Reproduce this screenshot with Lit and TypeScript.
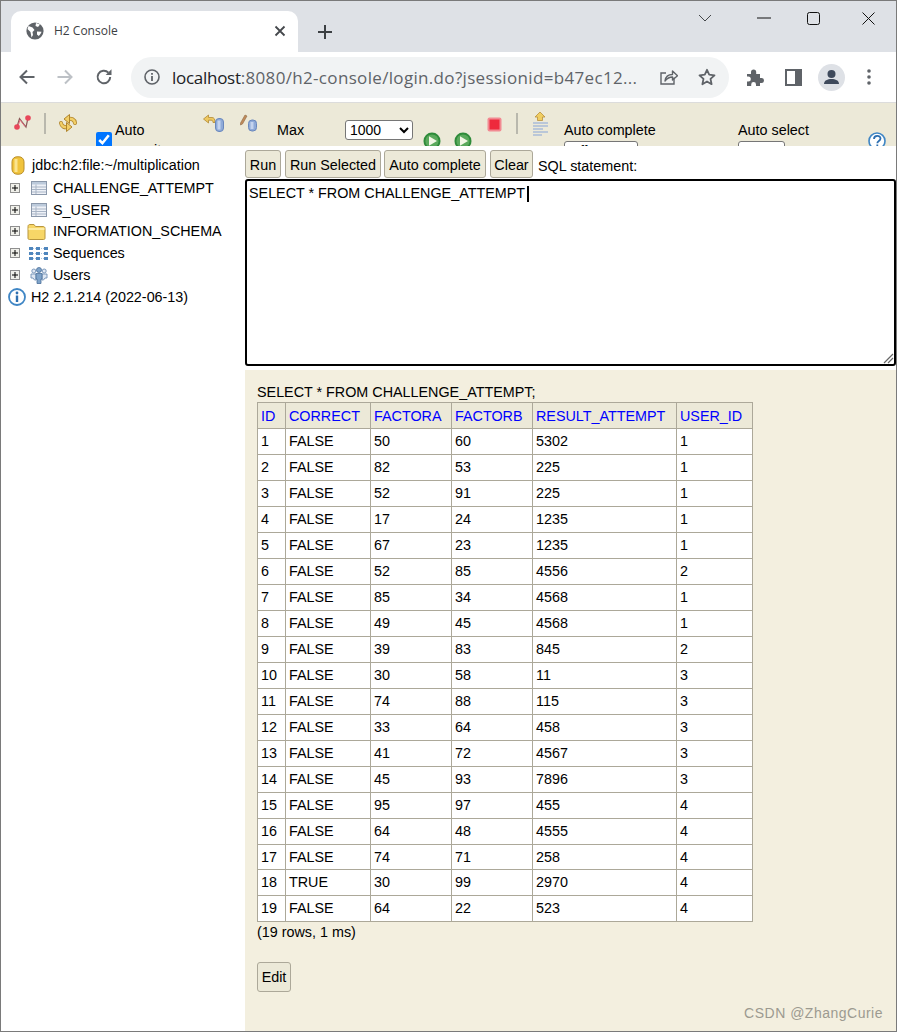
import { LitElement, html, css, svg } from "lit";
import { customElement } from "lit/decorators.js";

const ROWS: (string | number)[][] = [
  [1, "FALSE", 50, 60, 5302, 1],
  [2, "FALSE", 82, 53, 225, 1],
  [3, "FALSE", 52, 91, 225, 1],
  [4, "FALSE", 17, 24, 1235, 1],
  [5, "FALSE", 67, 23, 1235, 1],
  [6, "FALSE", 52, 85, 4556, 2],
  [7, "FALSE", 85, 34, 4568, 1],
  [8, "FALSE", 49, 45, 4568, 1],
  [9, "FALSE", 39, 83, 845, 2],
  [10, "FALSE", 30, 58, 11, 3],
  [11, "FALSE", 74, 88, 115, 3],
  [12, "FALSE", 33, 64, 458, 3],
  [13, "FALSE", 41, 72, 4567, 3],
  [14, "FALSE", 45, 93, 7896, 3],
  [15, "FALSE", 95, 97, 455, 4],
  [16, "FALSE", 64, 48, 4555, 4],
  [17, "FALSE", 74, 71, 258, 4],
  [18, "TRUE", 30, 99, 2970, 4],
  [19, "FALSE", 64, 22, 523, 4],
];
const COLS = ["ID", "CORRECT", "FACTORA", "FACTORB", "RESULT_ATTEMPT", "USER_ID"];

const runIcon = html`<svg width="18" height="18" viewBox="0 0 18 18"><circle cx="9" cy="9" r="8.5" fill="#2e8b3a"/><circle cx="9" cy="9" r="6.6" fill="#5aa95c"/><path d="M6 4.2 14 9 6 13.8z" fill="#f2f7e6"/></svg>`;
const cyl = (x: number, y: number, h: number) => svg`<rect x="${x}" y="${y}" width="8" height="${h}" rx="3.5" fill="#8faad8" stroke="#6a88bd" stroke-width="1"/><rect x="${x + 2}" y="${y + 2}" width="3" height="${h - 4}" fill="#c4d3ee"/>`;
const plus = html`<svg class="plus" width="10" height="10" viewBox="0 0 10 10"><rect x=".5" y=".5" width="9" height="9" fill="#f0f0ea" stroke="#8f8f8f"/><path d="M2 5h6M5 2v6" stroke="#000" stroke-width="1"/></svg>`;
const tableIcon = html`<svg class="ti" width="16" height="14" viewBox="0 0 16 14"><rect x=".5" y=".5" width="15" height="13" fill="#eef1f7" stroke="#8b98ab"/><rect x="1" y="1" width="14" height="2.500" fill="#bccadb"/><path d="M1 6h14M1 8.500h14M1 11h14M5 3.500V13" stroke="#a9b5c6"/></svg>`;

@customElement("app-root")
export class AppRoot extends LitElement {
  static styles = css`
    :host { display: block; width: 897px; height: 1032px; position: relative; overflow: hidden; font-family: "Liberation Sans", Arial, sans-serif; font-size: 14.35px; color: #000; }
    .win { box-sizing: border-box; width: 897px; height: 1032px; border: 1px solid #7a7a7a; display: flex; flex-direction: column; background: #fff; overflow: hidden; }

    .strip { height: 51px; flex: none; background: #dee1e6; display: flex; align-items: flex-end; padding-left: 10px; }
    .tab { width: 287px; height: 41px; box-sizing: border-box; background: #fff; border-radius: 10px 10px 0 0; display: flex; align-items: center; padding: 0 0 2px 15px; font-family: "Open Sans", "Noto Sans", sans-serif; font-size: 12px; color: #3c4043; position: relative; }
    .tab .title { margin-left: 10px; flex: 1; }
    .tab .x { margin-right: 12px; display: flex; }
    .new { margin: 0 0 10px 19px; align-self: flex-end; height: 20px; display: flex; }
    .new svg { margin-top: 2px; }
    .ctrl { margin-left: auto; align-self: flex-start; display: flex; align-items: center; height: 14px; margin-top: 10px; }
    .ctrl svg { display: block; }
    .c1 { margin-right: 45px; }
    .c2 { margin-right: 36px; }
    .c3 { margin-right: 42px; }
    .c4 { margin-right: 21px; }

    .nav { height: 50px; flex: none; background: #fff; display: flex; align-items: center; border-bottom: 1px solid #dcdcdc; box-sizing: content-box; }
    .nav svg { display: block; flex: none; }
    .back { margin-left: 18px; }
    .fwd { margin-left: 22px; }
    .rel { margin-left: 22px; }
    .omni { margin-left: 18px; width: 598px; height: 41px; background: #f1f3f4; border-radius: 21px; display: flex; align-items: center; box-sizing: border-box; padding-left: 13px; }
    .url { margin-left: 12px; font-family: "Open Sans", "Noto Sans", sans-serif; font-size: 17px; letter-spacing: 0.33px; color: #5f6368; white-space: nowrap; width: 474px; overflow: hidden; }
    .url b { font-weight: 400; color: #202124; letter-spacing: -0.28px; }
    .share { margin-left: 14px; }
    .star { margin-left: 20px; }
    .puz { margin-left: 17px; }
    .side { margin-left: 21px; }
    .avatar { margin-left: 16px; }
    .dots { margin-left: 22px; }

    .h2bar { height: 43px; flex: none; background: #ece9d8; display: flex; align-items: flex-start; overflow: hidden; color: #000; }
    .h2bar > * { flex: none; }
    .h2bar svg { display: block; }
    .i-conn { margin: 10px 0 0 11px; }
    .sep { width: 2px; height: 21px; background: #b9b8ad; margin-top: 10px; }
    .s1 { margin-left: 12px; }
    .i-ref { margin: 10px 0 0 12px; }
    .auto { margin: 17px 0 0 18px; width: 95px; display: flex; align-items: flex-start; }
    .auto input { width: 16px; height: 16px; margin: 12px 3px 0 0; flex: none; accent-color: #0075ff; }
    .auto span { line-height: 20px; width: 50px; }
    .i-hist { margin: 10px 0 0 12px; }
    .i-edit { margin: 10px 0 0 16px; }
    .max { margin: 19px 0 0 19px; width: 68px; line-height: 16px; }
    .sel { height: 20px; font: 14px "Liberation Sans", Arial, sans-serif; background: #fff; border: 1px solid #767676; border-radius: 3px; padding: 0; box-sizing: border-box; }
    .s-max { width: 68px; margin-top: 17px; }
    .r1 { margin: 29px 0 0 10px; }
    .r2 { margin: 29px 0 0 13px; }
    .i-stop { margin: 14px 0 0 15px; }
    .s2 { margin-left: 14px; }
    .i-page { margin: 9px 0 0 14px; }
    .ac { margin: 19px 0 0 14px; width: 174px; display: flex; flex-direction: column; align-items: flex-start; line-height: 16px; gap: 3px; }
    .as { width: 130px; display: flex; flex-direction: column; align-items: flex-start; line-height: 16px; gap: 3px; margin-top: 19px; }
    .s-ac { width: 74px; }
    .s-as { width: 47px; }
    .help { margin-top: 29px; }

    .main { flex: 1; display: flex; min-height: 0; }
    .tree { width: 244px; flex: none; padding-top: 8px; box-sizing: border-box; color: #000; }
    .row { height: 22px; display: flex; align-items: center; white-space: nowrap; }
    .row svg { display: block; flex: none; }
    .row.first { height: 22px; margin-bottom: 1px; }
    .row.thin { height: 21px; }
    .plus { margin-left: 9px; }
    .ti { margin-left: 11px; margin-right: 6px; }
    .db { margin: 0 7px 0 10px; }
    .fo { margin-left: 7px; margin-right: 7px; }
    .sq { margin-left: 9px; margin-right: 5px; }
    .us { margin-left: 10px; margin-right: 5px; }
    .inf { margin: 0 5px 0 7px; }

    .right { flex: 1; display: flex; flex-direction: column; min-width: 0; }
    .btns { display: flex; align-items: flex-start; padding-top: 4px; height: 33px; box-sizing: border-box; gap: 3px; }
    .btns span { line-height: 32px; }
    button { height: 28px; box-sizing: border-box; font: 14.35px "Liberation Sans", Arial, sans-serif; background: #ece9d8; color: #000; border: 1px solid #aca899; border-radius: 3px; padding: 1px 0 0; margin: 0; }
    .b-run { width: 36px; margin-right: 1px; }
    .b-sel { width: 96px; }
    .b-auto { width: 102px; margin-right: 1px; }
    .b-clr { width: 43px; margin-right: 2px; }
    .ta { box-sizing: border-box; height: 187px; width: 651px; border: 2px solid #000; border-radius: 3px; padding: 4px 2px; line-height: 16px; position: relative; white-space: pre; }
    .caret { display: inline-block; width: 2px; height: 16px; background: #000; vertical-align: top; margin: 1px 0 0 2px; }
    .grip { position: absolute; right: 0; bottom: 0; }
    .res { flex: 1; margin-top: 4px; background: #f3efdf; padding: 14px 0 0 12px; min-height: 0; }
    .q { line-height: 16px; margin-bottom: 2px; height: 16px; }
    table { border-collapse: collapse; }
    th, td { border: 1px solid #aca899; text-align: left; font-weight: 400; padding: 0 3px; height: 26px; box-sizing: border-box; line-height: 16px; background: #fff; }
    td { padding-bottom: 1px; }
    tr.short td { height: 25px; }
    th { background: #ece9d8; color: #0000ff; }
    .w0 { width: 28px; } .w1 { width: 85px; } .w2 { width: 81px; } .w3 { width: 81px; } .w4 { width: 144px; } .w5 { width: 76px; }
    .cnt { line-height: 16px; margin-top: 2px; }
    .edit { margin-top: 22px; display: block; width: 34px; height: 30px; padding: 0; }
    .wm { position: absolute; right: 14px; bottom: 11px; font-size: 14px; line-height: 16px; color: #9c9a90; letter-spacing: 0.5px; }
  `;

  render() {
    return html`<div class="win">
      <div class="strip">
        <div class="tab">
          <svg width="18" height="18" viewBox="0 0 18 18"><circle cx="9" cy="9" r="8.6" fill="#5f6368"/><path d="M2.500 4 6.500 5.500 8.500 8 6.500 10 7 13 5.500 15.500 4.500 10 1.500 7zM10 1 14 2.500 12 5 9.500 4zM11 9.500 15.500 9.800C15 11.500 14 13 12.800 14L11 12.500z" fill="#fff"/></svg>
          <span class="title">H2 Console</span>
          <span class="x"><svg width="12" height="12" viewBox="0 0 12 12"><path d="M1.500 1.500l9 9M10.500 1.500l-9 9" stroke="#45484c" stroke-width="1.800"/></svg></span>
        </div>
        <span class="new"><svg width="16" height="16" viewBox="0 0 16 16"><path d="M8 1v14M1 8h14" stroke="#3c4043" stroke-width="2"/></svg></span>
        <span class="ctrl">
          <svg class="c1" width="14" height="8" viewBox="0 0 14 8"><path d="M1 1l6 6 6-6" fill="none" stroke="#44474a" stroke-width="1"/></svg>
          <svg class="c2" width="14" height="2" viewBox="0 0 14 2"><path d="M0 1h14" stroke="#111" stroke-width="1"/></svg>
          <svg class="c3" width="13" height="13" viewBox="0 0 13 13"><rect x=".5" y=".5" width="12" height="12" rx="2" fill="none" stroke="#111"/></svg>
          <svg class="c4" width="13" height="13" viewBox="0 0 13 13"><path d="M.5.5l12 12M12.500.5l-12 12" stroke="#111" stroke-width="1"/></svg>
        </span>
      </div>

      <div class="nav">
        <svg class="back" width="16" height="16" viewBox="0 0 16 16"><path d="M15.500 8H1.500M8 1.500 1.500 8 8 14.500" fill="none" stroke="#5f6368" stroke-width="2"/></svg>
        <svg class="fwd" width="16" height="16" viewBox="0 0 16 16"><path d="M.5 8h14M8 1.500 14.500 8 8 14.500" fill="none" stroke="#bdc1c6" stroke-width="2"/></svg>
        <svg class="rel" width="18" height="18" viewBox="0 0 18 18"><path d="M15.200 9a6.300 6.300 0 1 1-1.800-4.400" fill="none" stroke="#5f6368" stroke-width="2"/><path d="M16.500 1.200V7H10.700z" fill="#5f6368"/></svg>
        <div class="omni">
          <svg width="16" height="16" viewBox="0 0 16 16"><circle cx="8" cy="8" r="7" fill="none" stroke="#5f6368" stroke-width="1.600"/><path d="M8 7v5M8 4v1.800" stroke="#5f6368" stroke-width="1.800"/></svg>
          <span class="url"><b>localhost</b>:8080/h2-console/login.do?jsessionid=b47ec12...</span>
          <svg class="share" width="18" height="18" viewBox="0 0 18 18"><path d="M14 9.500V16H1V5h5" fill="none" stroke="#5f6368" stroke-width="1.400"/><path d="M5 13c.5-4 3.500-6.500 7.500-6.500V3L17.500 7.800 12.500 12V9C9.500 9 7 10.500 5 13z" fill="none" stroke="#5f6368" stroke-width="1.400" stroke-linejoin="round"/></svg>
          <svg class="star" width="18" height="18" viewBox="0 0 18 18"><path d="M9 1.800l2.200 4.900 5.300.6-4 3.600 1.100 5.300L9 13.500l-4.600 2.700 1.100-5.300-4-3.600 5.300-.6z" fill="none" stroke="#5f6368" stroke-width="1.800" stroke-linejoin="round"/></svg>
        </div>
        <svg class="puz" width="18" height="18" viewBox="0 0 18 18"><path d="M1 6h4V4.200a2.600 2.600 0 0 1 5.200 0V6H14v4h1.500a2.500 2.500 0 0 1 0 5H14v3H10v-1.500a2.400 2.400 0 0 0-4.800 0V18H1v-4.500h1.300a2.500 2.500 0 0 0 0-5H1z" fill="#5f6368"/></svg>
        <svg class="side" width="17" height="17" viewBox="0 0 17 17"><rect x="1" y="1" width="15" height="15" fill="none" stroke="#5f6368" stroke-width="2"/><rect x="10" y="1" width="6" height="15" fill="#5f6368"/></svg>
        <svg class="avatar" width="27" height="27" viewBox="0 0 27 27"><circle cx="13.500" cy="13.500" r="13.500" fill="#dee1e6"/><circle cx="13.500" cy="10" r="4" fill="#3f4a5c"/><path d="M6 20c0-3.600 3.500-5 7.500-5s7.500 1.400 7.500 5z" fill="#3f4a5c"/></svg>
        <svg class="dots" width="4" height="16" viewBox="0 0 4 16"><circle cx="2" cy="2" r="1.800" fill="#5f6368"/><circle cx="2" cy="8" r="1.800" fill="#5f6368"/><circle cx="2" cy="14" r="1.800" fill="#5f6368"/></svg>
      </div>

      <div class="h2bar">
        <svg class="i-conn" width="20" height="20" viewBox="0 0 20 20"><path d="M5 14 7.500 5.500 14 14 16 5" fill="none" stroke="#8d5a5a" stroke-width="1.200"/><path d="M6 13 8 7 13 13.500" fill="none" stroke="#e8667a" stroke-width=".9"/><circle cx="5" cy="14" r="2.800" fill="#e8475a"/><circle cx="16" cy="5" r="2.800" fill="#e8475a"/></svg>
        <span class="sep s1"></span>
        <svg class="i-ref" width="20" height="20" viewBox="0 0 20 20"><g fill="none" stroke-linecap="round"><path d="M17 10C16.500 6.500 13.500 5.200 10 6M3 10C3.500 13.500 6.500 14.800 10 14" stroke="#b0852c" stroke-width="4"/><path d="M17 10C16.500 6.500 13.500 5.200 10 6M3 10C3.500 13.500 6.500 14.800 10 14" stroke="#f2cf68" stroke-width="2.400"/></g><path d="M11.500 1.500 6 6l5.500 4.500zM8.500 18.500 14 14 8.500 9.500z" fill="#f2cf68" stroke="#b0852c" stroke-width="1" stroke-linejoin="round"/></svg>
        <label class="auto"><input type="checkbox" checked /><span>Auto commit</span></label>
        <svg class="i-hist" width="21" height="19" viewBox="0 0 21 19"><path d="M.5 6 5.500 2v2.500H9c2 0 3 1.500 3 5H10c0-1.500-.5-2.300-2-2.300H5.500V10z" fill="#eec860" stroke="#b28a35" stroke-width=".8"/>${cyl(12.5, 5.5, 13)}</svg>
        <svg class="i-edit" width="18" height="19" viewBox="0 0 18 19"><path d="M.5 10 5 2 7 3 2.500 11l-2 1z" fill="#c08a5a" stroke="#8f6a45" stroke-width=".6"/>${cyl(8.5, 7, 11)}</svg>
        <span class="max">Max</span>
        <select class="sel s-max"><option>1000</option></select>
        <span class="r1">${runIcon}</span>
        <span class="r2">${runIcon}</span>
        <svg class="i-stop" width="15" height="15" viewBox="0 0 15 15"><rect x=".5" y=".5" width="14" height="14" rx="2" fill="#f28a92"/><rect x="2.500" y="2.500" width="10" height="10" fill="#ee2a3c"/></svg>
        <span class="sep s2"></span>
        <svg class="i-page" width="18" height="25" viewBox="0 0 18 25"><path d="M8 0 13 5H10.500V8.500H5.500V5H3z" fill="#f0ce62" stroke="#b9913c" stroke-width=".8"/><path d="M1 11h15M1 14h15M1 17h10M1 20h15M1 23h9" stroke="#a9bcd8" stroke-width="1.500"/></svg>
        <div class="ac"><span>Auto complete</span><select class="sel s-ac"><option>Off</option></select></div>
        <div class="as"><span>Auto select</span><select class="sel s-as"><option>On</option></select></div>
        <svg class="help" width="18" height="18" viewBox="0 0 18 18"><circle cx="9" cy="9" r="8" fill="#fff" stroke="#3f86c5" stroke-width="1.600"/><path d="M6 7c0-4.200 6.500-4.200 6.500-.5 0 2.500-3.200 2.500-3.200 4.800" fill="none" stroke="#2d6fb0" stroke-width="1.800"/><path d="M9.300 12.500v2" stroke="#2d6fb0" stroke-width="1.800"/></svg>
      </div>

      <div class="main">
        <div class="tree">
          <div class="row first"><svg class="db" width="14" height="19" viewBox="0 0 14 19"><rect x="1" y=".8" width="12" height="17.400" rx="5" fill="#f0c33c" stroke="#b98e2a"/><rect x="3.500" y="3" width="3" height="13" fill="#fbe48f"/></svg>jdbc:h2:file:~/multiplication</div>
          <div class="row">${plus}${tableIcon}CHALLENGE_ATTEMPT</div>
          <div class="row thin">${plus}${tableIcon}S_USER</div>
          <div class="row">${plus}<svg class="fo" width="19" height="17" viewBox="0 0 19 17"><path d="M1 3.500C1 2 2 1.500 3 1.500h4l1.500 2H16c1 0 2 .5 2 2V15c0 1-.5 1.500-1.500 1.500h-14C1.500 16.500 1 16 1 15z" fill="#f7d667" stroke="#b8963e"/><path d="M1.500 6h16" stroke="#fff3b8" stroke-width="1.500"/></svg>INFORMATION_SCHEMA</div>
          <div class="row">${plus}<svg class="sq" width="19" height="15" viewBox="0 0 19 15"><path d="M0 2.500h19M0 7.500h19M0 12.500h19" stroke="#a9c2de" stroke-dasharray="1 1"/><g fill="#4f86bd"><rect x="0" y="1" width="4" height="3"/><rect x="7" y="1" width="4" height="3"/><rect x="15" y="1" width="4" height="3"/><rect x="0" y="6" width="4" height="3"/><rect x="7" y="6" width="4" height="3"/><rect x="15" y="6" width="4" height="3"/><rect x="0" y="11" width="4" height="3"/><rect x="7" y="11" width="4" height="3"/><rect x="15" y="11" width="4" height="3"/></g></svg>Sequences</div>
          <div class="row">${plus}<svg class="us" width="18" height="18" viewBox="0 0 18 18"><g fill="#dfe7f2" stroke="#6f8fb4" stroke-width=".9"><circle cx="3.800" cy="5" r="2"/><circle cx="14.200" cy="5" r="2"/><path d="M1 8h5v6H4.500L3 12H1zM17 8h-5v6h1.500L15 12h2z"/></g><circle cx="9" cy="4" r="2.500" fill="#7fa3c9" stroke="#4a6f99" stroke-width=".8"/><path d="M6 7.500h6V13H11v4.500H7V13H6z" fill="#7fa3c9" stroke="#4a6f99" stroke-width=".8"/></svg>Users</div>
          <div class="row"><svg class="inf" width="18" height="18" viewBox="0 0 18 18"><circle cx="9" cy="9" r="8" fill="#fff" stroke="#3f86c5" stroke-width="1.800"/><circle cx="9" cy="5" r="1.400" fill="#2d6fb0"/><path d="M9 7.500V14" stroke="#2d6fb0" stroke-width="2.400"/></svg>H2 2.1.214 (2022-06-13)</div>
        </div>
        <div class="right">
          <div class="btns">
            <button class="b-run">Run</button><button class="b-sel">Run Selected</button><button class="b-auto">Auto complete</button><button class="b-clr">Clear</button><span>SQL statement:</span>
          </div>
          <div class="ta">SELECT * FROM CHALLENGE_ATTEMPT<span class="caret"></span>
            <svg class="grip" width="12" height="12" viewBox="0 0 12 12"><path d="M11 2 2 11M11 6 6 11" stroke="#666" stroke-width="1.200"/></svg>
          </div>
          <div class="res">
            <div class="q">SELECT * FROM CHALLENGE_ATTEMPT;</div>
            <table>
              <thead><tr>${COLS.map((c, i) => html`<th class="w${i}">${c}</th>`)}</tr></thead>
              <tbody>${ROWS.map((r, i) => html`<tr class="${i === 16 ? "short" : ""}">${r.map((v) => html`<td>${v}</td>`)}</tr>`)}</tbody>
            </table>
            <div class="cnt">(19 rows, 1 ms)</div>
            <button class="edit">Edit</button>
          </div>
        </div>
      </div>
    </div>
    <div class="wm">CSDN @ZhangCurie</div>`;
  }
}
